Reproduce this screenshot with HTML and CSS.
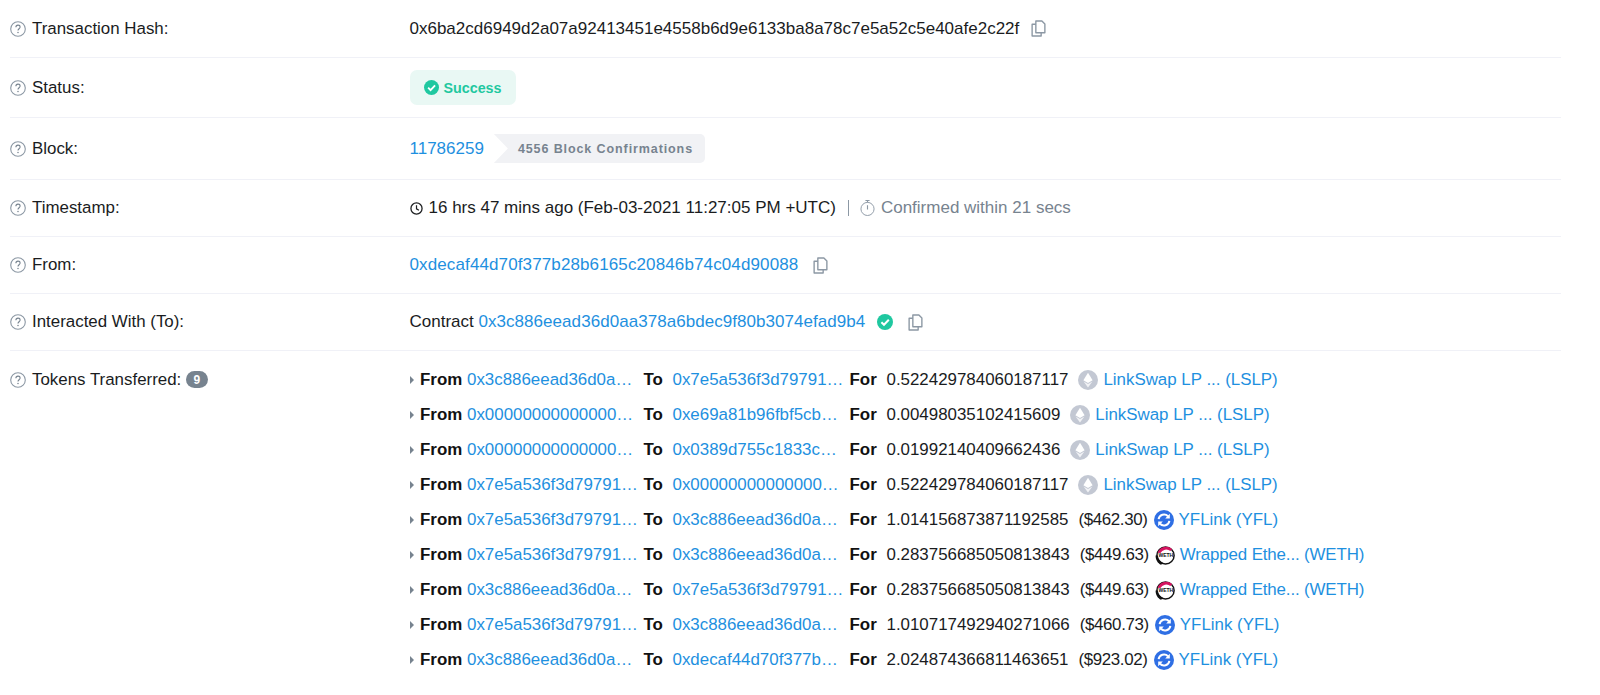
FILE: index.html
```html
<!DOCTYPE html>
<html lang="en">
<head>
<meta charset="utf-8">
<title>Transaction Details</title>
<link rel="stylesheet" href="styles.css">
</head>
<body>
<svg class="defs" width="0" height="0" aria-hidden="true">
  <defs>
    <symbol id="q" viewBox="0 0 16 16"><circle cx="8" cy="8" r="7.3" fill="none" stroke="#8c98a4" stroke-width="1.1"/><path d="M5.9 6.2C5.9 4.9 6.8 4.1 8 4.1s2.1.8 2.1 1.9c0 1.7-2.1 1.8-2.1 3.6" fill="none" stroke="#77838f" stroke-width="1.1"/><circle cx="8" cy="11.5" r=".75" fill="#77838f"/></symbol>
    <symbol id="copy" viewBox="0 0 14 16"><path d="M4.5 1h5.7L13 3.8v8.2H4.5z" fill="none" stroke="#8c98a4" stroke-width="1.3" stroke-linejoin="round"/><path d="M4.5 4H1v11h8.5v-3" fill="none" stroke="#8c98a4" stroke-width="1.3" stroke-linejoin="round"/></symbol>
    <symbol id="check" viewBox="0 0 16 16"><circle cx="8" cy="8" r="8" fill="#1fc8a0"/><path d="M4.4 8.2l2.6 2.6 4.8-5" fill="none" stroke="#fff" stroke-width="2"/></symbol>
    <symbol id="eth" viewBox="0 0 20 20"><circle cx="10" cy="10" r="10" fill="#c3c8d3"/><path d="M10 2.8L5.4 10.2 10 13l4.6-2.8z" fill="#fff"/><path d="M5.6 11.4L10 17.4l4.4-6L10 14.1z" fill="#f1f2f5"/></symbol>
    <symbol id="yfl" viewBox="0 0 20 20"><circle cx="10" cy="10" r="10" fill="#2f6fe4"/><path d="M4.6 9.2A5.5 5.5 0 0 1 14 6.2" fill="none" stroke="#fff" stroke-width="2"/><path d="M15.8 3.8v4.6h-4.6z" fill="#fff"/><path d="M15.4 10.8A5.5 5.5 0 0 1 6 13.8" fill="none" stroke="#fff" stroke-width="2"/><path d="M4.2 16.2v-4.6h4.6z" fill="#fff"/></symbol>
    <symbol id="weth" viewBox="0 0 20 20"><circle cx="10.5" cy="10.5" r="8.6" fill="#fff" stroke="#111" stroke-width="1.5"/><path d="M2.6 7.8A8.8 8.8 0 0 1 17.2 4.2L15.4 6A6.6 6.6 0 0 0 5.4 8z" fill="#d5135f"/><path d="M.6 10.5c0 4.6 2.2 7.8 5.4 9.3L8.6 18C5.2 16.6 3.2 14 2.9 10.5z" fill="#111"/><text class="weth-text" x="10.8" y="12.4" text-anchor="middle">WETH</text></symbol>
  </defs>
</svg>
<main class="card">
  <section class="row r-hash">
    <div class="label"><svg class="help"><use href="#q"/></svg>Transaction Hash:</div>
    <div class="value">0x6ba2cd6949d2a07a92413451e4558b6d9e6133ba8a78c7e5a52c5e40afe2c22f<svg class="copy copy-hash"><use href="#copy"/></svg></div>
  </section>
  <section class="row r-status">
    <div class="label"><svg class="help"><use href="#q"/></svg>Status:</div>
    <div class="value"><span class="success"><svg class="success-icon"><use href="#check"/></svg>Success</span></div>
  </section>
  <section class="row r-block">
    <div class="label"><svg class="help"><use href="#q"/></svg>Block:</div>
    <div class="value"><a class="link" href="#">11786259</a><span class="confirm">4556 Block Confirmations</span></div>
  </section>
  <section class="row r-time">
    <div class="label"><svg class="help"><use href="#q"/></svg>Timestamp:</div>
    <div class="value">
      <svg class="clock" viewBox="0 0 14 14"><circle cx="7" cy="7" r="6" fill="none" stroke="#1e2022" stroke-width="1.4"/><path d="M7 3.4V7.4l2.6 1.5" fill="none" stroke="#1e2022" stroke-width="1.3"/></svg>16 hrs 47 mins ago (Feb-03-2021 11:27:05 PM +UTC)<span class="sep"></span>
      <svg class="timer" viewBox="0 0 16 18"><circle cx="8" cy="10" r="7" fill="none" stroke="#8c98a4" stroke-width="1"/><path d="M8 6v4.5M5.8 1h4.4M8 1v2" fill="none" stroke="#8c98a4" stroke-width="1.2"/></svg><span class="muted">Confirmed within 21 secs</span>
    </div>
  </section>
  <section class="row r-from">
    <div class="label"><svg class="help"><use href="#q"/></svg>From:</div>
    <div class="value"><a class="link link-from" href="#">0xdecaf44d70f377b28b6165c20846b74c04d90088</a><svg class="copy copy-from"><use href="#copy"/></svg></div>
  </section>
  <section class="row r-to">
    <div class="label"><svg class="help"><use href="#q"/></svg>Interacted With (To):</div>
    <div class="value">Contract&nbsp;<a class="link link-to" href="#">0x3c886eead36d0aa378a6bdec9f80b3074efad9b4</a><svg class="verified"><use href="#check"/></svg><svg class="copy copy-to"><use href="#copy"/></svg></div>
  </section>
  <section class="tokens">
    <div class="label"><svg class="help"><use href="#q"/></svg>Tokens Transferred:<span class="count">9</span></div>
    <div class="token-list">
      <div class="token"><i class="caret"></i><b class="w-from">From</b><a class="link addr" href="#">0x3c886eead36d0a…</a><b class="w-to">To</b><a class="link addr2" href="#">0x7e5a536f3d79791…</a><b class="w-for">For</b><span>0.522429784060187117</span><svg class="coin coin-gap"><use href="#eth"/></svg><a class="link" href="#">LinkSwap LP ... (LSLP)</a></div>
      <div class="token"><i class="caret"></i><b class="w-from">From</b><a class="link addr" href="#">0x00000000000000…</a><b class="w-to">To</b><a class="link addr2" href="#">0xe69a81b96fbf5cb…</a><b class="w-for">For</b><span>0.00498035102415609</span><svg class="coin coin-gap"><use href="#eth"/></svg><a class="link" href="#">LinkSwap LP ... (LSLP)</a></div>
      <div class="token"><i class="caret"></i><b class="w-from">From</b><a class="link addr" href="#">0x00000000000000…</a><b class="w-to">To</b><a class="link addr2" href="#">0x0389d755c1833c…</a><b class="w-for">For</b><span>0.01992140409662436</span><svg class="coin coin-gap"><use href="#eth"/></svg><a class="link" href="#">LinkSwap LP ... (LSLP)</a></div>
      <div class="token"><i class="caret"></i><b class="w-from">From</b><a class="link addr" href="#">0x7e5a536f3d79791…</a><b class="w-to">To</b><a class="link addr2" href="#">0x00000000000000…</a><b class="w-for">For</b><span>0.522429784060187117</span><svg class="coin coin-gap"><use href="#eth"/></svg><a class="link" href="#">LinkSwap LP ... (LSLP)</a></div>
      <div class="token"><i class="caret"></i><b class="w-from">From</b><a class="link addr" href="#">0x7e5a536f3d79791…</a><b class="w-to">To</b><a class="link addr2" href="#">0x3c886eead36d0a…</a><b class="w-for">For</b><span>1.014156873871192585</span><span class="usd">($462.30)</span><svg class="coin"><use href="#yfl"/></svg><a class="link" href="#">YFLink (YFL)</a></div>
      <div class="token"><i class="caret"></i><b class="w-from">From</b><a class="link addr" href="#">0x7e5a536f3d79791…</a><b class="w-to">To</b><a class="link addr2" href="#">0x3c886eead36d0a…</a><b class="w-for">For</b><span>0.283756685050813843</span><span class="usd">($449.63)</span><svg class="coin"><use href="#weth"/></svg><a class="link link-weth" href="#">Wrapped Ethe... (WETH)</a></div>
      <div class="token"><i class="caret"></i><b class="w-from">From</b><a class="link addr" href="#">0x3c886eead36d0a…</a><b class="w-to">To</b><a class="link addr2" href="#">0x7e5a536f3d79791…</a><b class="w-for">For</b><span>0.283756685050813843</span><span class="usd">($449.63)</span><svg class="coin"><use href="#weth"/></svg><a class="link link-weth" href="#">Wrapped Ethe... (WETH)</a></div>
      <div class="token"><i class="caret"></i><b class="w-from">From</b><a class="link addr" href="#">0x7e5a536f3d79791…</a><b class="w-to">To</b><a class="link addr2" href="#">0x3c886eead36d0a…</a><b class="w-for">For</b><span>1.010717492940271066</span><span class="usd">($460.73)</span><svg class="coin"><use href="#yfl"/></svg><a class="link" href="#">YFLink (YFL)</a></div>
      <div class="token"><i class="caret"></i><b class="w-from">From</b><a class="link addr" href="#">0x3c886eead36d0a…</a><b class="w-to">To</b><a class="link addr2" href="#">0xdecaf44d70f377b…</a><b class="w-for">For</b><span>2.024874366811463651</span><span class="usd">($923.02)</span><svg class="coin"><use href="#yfl"/></svg><a class="link" href="#">YFLink (YFL)</a></div>
    </div>
  </section>
</main>
</body>
</html>
```
FILE: styles.css
```css
* { box-sizing: border-box; }
html, body { margin: 0; padding: 0; background: #fff; }
body { font-family: "Liberation Sans", Arial, sans-serif; font-size: 16.9px; color: #1a1c1e; height: 695px; overflow: hidden; }
.defs { position: absolute; }
.card { padding: 0 39px 0 10px; }
.row { display: flex; align-items: center; border-bottom: 1px solid #f0f1f7; }
.r-hash { height: 58px; }
.r-status { height: 60px; }
.r-block { height: 62px; }
.r-time { height: 57px; }
.r-from { height: 57px; }
.r-to { height: 57px; }
.label { width: 399.5px; flex: none; display: flex; align-items: center; }
.value { display: flex; align-items: center; white-space: nowrap; font-size: 17px; }
.help { width: 16px; height: 16px; margin-right: 6px; flex: none; }
.link { color: #1e90e0; text-decoration: none; }
.link-from { letter-spacing: .12px; }
.link-to { letter-spacing: .05px; }
.link-weth { letter-spacing: -.14px; }
.copy { width: 15px; height: 17px; flex: none; }
.copy-hash { margin-left: 12px; }
.copy-from { margin-left: 15px; }
.copy-to { margin-left: 15px; }
.success { display: inline-flex; align-items: center; height: 35px; width: 106px; padding-left: 14px; border-radius: 7px; background: #e9f8f4; color: #1fc8a0; font-weight: 700; font-size: 14.3px; }
.success-icon { width: 15px; height: 15px; margin-right: 5px; }
.confirm { height: 29px; margin-left: 10px; padding: 0 12px 0 24px; display: inline-flex; align-items: center; background: #f1f2f5; color: #77838f; font-weight: 700; font-size: 12.5px; letter-spacing: .9px; clip-path: polygon(0 0, 100% 0, 100% 100%, 0 100%, 14px 50%); border-radius: 0 5px 5px 0; }
.clock { width: 13px; height: 13px; margin-right: 6px; }
.sep { width: 1px; height: 16px; background: #8c98a4; margin: 0 11px 0 12px; }
.timer { width: 15px; height: 18px; margin-right: 6px; }
.muted { color: #77838f; }
.verified { width: 16px; height: 16px; margin-left: 12px; }
.tokens { display: flex; padding-top: 11px; }
.tokens > .label { align-self: flex-start; height: 35px; }
.count { display: inline-flex; justify-content: center; align-items: center; width: 22px; height: 17px; margin-left: 4.5px; border-radius: 9px; background: #77838f; color: #fff; font-size: 12px; font-weight: 700; }
.token-list { display: flex; flex-direction: column; }
.token { height: 35px; display: flex; align-items: center; white-space: nowrap; }
.caret { width: 0; height: 0; margin-right: 6.5px; border-left: 4px solid #77838f; border-top: 4px solid transparent; border-bottom: 4px solid transparent; }
.w-from { width: 47px; color: #111; }
.addr { width: 176.5px; }
.w-to { width: 29px; color: #111; }
.addr2 { width: 177px; }
.w-for { width: 37px; color: #111; }
.usd { margin-left: 10px; letter-spacing: -.35px; }
.coin { width: 20px; height: 20px; margin: 0 5px 0 6px; flex: none; }
.coin-gap { margin-left: 10px; margin-right: 5px; }
.weth-text { font-family: "Liberation Sans", Arial, sans-serif; font-size: 5px; font-weight: 700; fill: #111; }
```
